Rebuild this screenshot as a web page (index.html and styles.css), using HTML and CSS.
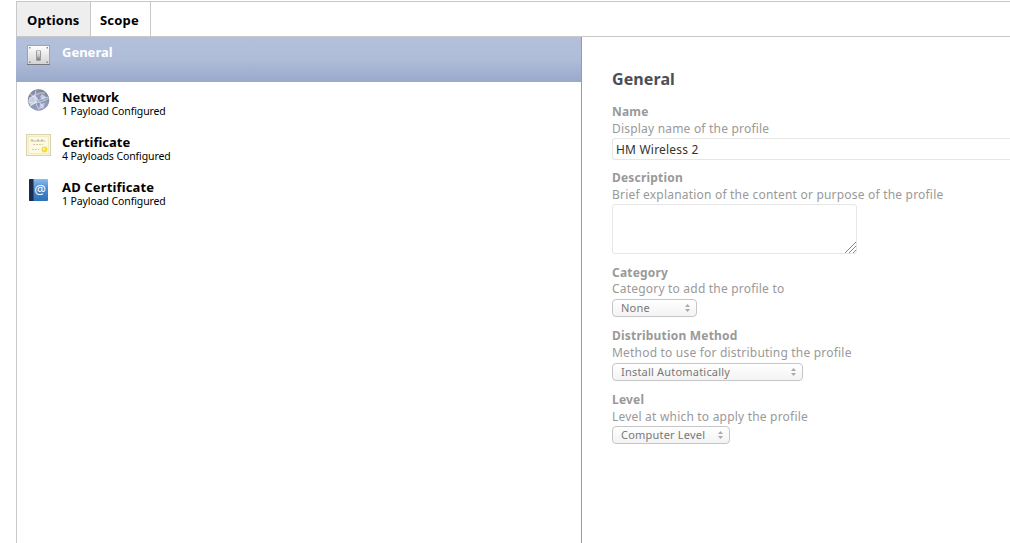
FILE: index.html
```
<!DOCTYPE html>
<html lang="en">
<head>
    <meta charset="UTF-8">
    <title>Configuration Profile</title>
    <link rel="stylesheet" href="styles.css">
</head>
<body>
    <div class="profile">
        <nav class="tabs">
            <a class="tab active">Options</a>
            <a class="tab scope">Scope</a>
        </nav>
        <div class="content">
            <ul class="payloads">
                <li class="payload selected">
                    <svg class="icon" width="26" height="24" viewBox="0 0 26 24">
                        <defs>
                            <linearGradient id="plate" x1="0" y1="0" x2="0" y2="1">
                                <stop offset="0" stop-color="#fff"/>
                                <stop offset="1" stop-color="#d2d2d2"/>
                            </linearGradient>
                            <linearGradient id="toggle" x1="0" y1="0" x2="0" y2="1">
                                <stop offset="0" stop-color="#f4f4f4"/>
                                <stop offset=".6" stop-color="#c4c4c4"/>
                                <stop offset="1" stop-color="#777"/>
                            </linearGradient>
                        </defs>
                        <rect x="1.5" y="1.5" width="22" height="19" fill="url(#plate)" stroke="#a2a3a8"/>
                        <path d="M1 20.5h23" stroke="#77787d"/>
                        <path d="M3 3h1.5v1.5H3zM20.5 3H22v1.5h-1.5zM3 17.5h1.5V19H3zM20.5 17.5H22V19h-1.5z" fill="#888"/>
                        <rect x="10" y="6" width="5" height="11" rx="1.5" fill="#9a9a9a"/>
                        <rect x="11" y="6.5" width="3" height="9" rx="1" fill="url(#toggle)"/>
                    </svg>
                    <div class="info">
                        <h2>General</h2>
                    </div>
                </li>
                <li class="payload">
                    <svg class="icon" width="26" height="24" viewBox="0 0 26 24">
                        <defs>
                            <radialGradient id="globe" cx=".5" cy=".6" r=".6">
                                <stop offset="0" stop-color="#8592b8"/>
                                <stop offset=".6" stop-color="#929dbd"/>
                                <stop offset="1" stop-color="#777b93"/>
                            </radialGradient>
                        </defs>
                        <circle cx="12.5" cy="11" r="10.7" fill="url(#globe)"/>
                        <path d="M4 5Q12-2 21 5Q16 7 10 5z" fill="#8d8fa0"/>
                        <path d="M3 9l5-3 4 3-2 5-5 3-2-3zM16 5l4 3-3 3-3-3zM14 15l5-1-2 5-4 1z" fill="#e3e7f2" opacity=".65"/>
                        <path d="M2 12Q9 3 19 4M4 5Q12 9 18 19M10 1Q7 11 13 21M2 13Q12 16 23 9M4 17Q14 9 22 8" fill="none" stroke="#f2f4fa" stroke-width=".6"/>
                    </svg>
                    <div class="info">
                        <h2>Network</h2>
                        <p>1 Payload Configured</p>
                    </div>
                </li>
                <li class="payload">
                    <svg class="icon" width="26" height="24" viewBox="0 0 26 24">
                        <rect x=".5" y=".5" width="24" height="21" fill="#fbf5d6" stroke="#d9d2ae"/>
                        <rect x="2.5" y="2.5" width="20" height="17" fill="#fdf9e2" stroke="#e8dfb4" stroke-dasharray="1 1"/>
                        <path d="M5 7.5l1-2 1 2 1-1 1 1 1-1 1 1 1-2 1 2 1-1 1 1 1-2 1 2 1-1 1 1" fill="none" stroke="#aaa68e" stroke-width=".8"/>
                        <path d="M7 10.5h10M6 15.5h7" stroke="#cfcab0" stroke-dasharray="2 1"/>
                        <circle cx="18.5" cy="15.5" r="3" fill="#f5dc3c"/>
                        <circle cx="18" cy="15" r="1.3" fill="#fff08a"/>
                    </svg>
                    <div class="info">
                        <h2>Certificate</h2>
                        <p>4 Payloads Configured</p>
                    </div>
                </li>
                <li class="payload">
                    <svg class="icon" width="26" height="24" viewBox="0 0 26 24">
                        <defs>
                            <linearGradient id="book" x1="0" y1="0" x2="0" y2="1">
                                <stop offset="0" stop-color="#8bbcec"/>
                                <stop offset=".45" stop-color="#4a8cd2"/>
                                <stop offset="1" stop-color="#2d6fb9"/>
                            </linearGradient>
                        </defs>
                        <rect x="3" y="0" width="19" height="22" rx="1" fill="url(#book)"/>
                        <path d="M4 0h3.5v22H4a1 1 0 0 1-1-1V1a1 1 0 0 1 1-1z" fill="#1d2c48"/>
                        <text x="14.2" y="14.5" class="at">@</text>
                    </svg>
                    <div class="info">
                        <h2 class="wide">AD Certificate</h2>
                        <p>1 Payload Configured</p>
                    </div>
                </li>
            </ul>
            <form class="settings">
                <h1>General</h1>
                <div class="field name">
                    <label>Name</label>
                    <p>Display name of the profile</p>
                    <div class="input">HM Wireless 2</div>
                </div>
                <div class="field description">
                    <label>Description</label>
                    <p>Brief explanation of the content or purpose of the profile</p>
                    <div class="textarea">
                        <svg width="12" height="12" viewBox="0 0 12 12">
                            <path d="M1 12L12 1M5 12l7-7M9 12l3-3" stroke="#888" stroke-width="1"/>
                        </svg>
                    </div>
                </div>
                <div class="field category">
                    <label>Category</label>
                    <p>Category to add the profile to</p>
                    <div class="select small">
                        <span>None</span>
                        <svg width="5" height="8" viewBox="0 0 5 8"><path d="M0 3l2.5-3L5 3zM0 5l2.5 3L5 5z" fill="#aaa"/></svg>
                    </div>
                </div>
                <div class="field distribution">
                    <label>Distribution Method</label>
                    <p>Method to use for distributing the profile</p>
                    <div class="select large">
                        <span>Install Automatically</span>
                        <svg width="5" height="8" viewBox="0 0 5 8"><path d="M0 3l2.5-3L5 3zM0 5l2.5 3L5 5z" fill="#aaa"/></svg>
                    </div>
                </div>
                <div class="field level">
                    <label>Level</label>
                    <p>Level at which to apply the profile</p>
                    <div class="select medium">
                        <span>Computer Level</span>
                        <svg width="5" height="8" viewBox="0 0 5 8"><path d="M0 3l2.5-3L5 3zM0 5l2.5 3L5 5z" fill="#aaa"/></svg>
                    </div>
                </div>
            </form>
        </div>
    </div>
</body>
</html>
```
FILE: styles.css
```
* {
    box-sizing: border-box;
    margin: 0;
    padding: 0;
}

body {
    height: 543px;
    overflow: hidden;
    background-color: #fff;
    color: #000;
    font-family: 'Noto Sans', sans-serif;
}

.profile {
    display: flex;
    flex-direction: column;
    height: 543px;
    margin-left: 16px;
    padding-top: 1px;
}

.tabs {
    display: flex;
    height: 36px;
    border: 1px solid #c8c8c8;
    border-right: none;
}

.tab {
    width: 74px;
    padding-left: 10px;
    border-right: 1px solid #c8c8c8;
    font-size: 13px;
    font-weight: 700;
    letter-spacing: 0.2px;
    line-height: 36px;
}

.tab.active {
    background-color: #eee;
}

.tab.scope {
    width: 60px;
    padding-left: 9px;
}

.content {
    display: flex;
    flex: 1;
    border-left: 1px solid #c8c8c8;
}

.payloads {
    width: 565px;
    border-right: 1px solid #9a9a9f;
    list-style: none;
}

.payload {
    display: flex;
    gap: 10px;
    height: 45px;
    padding: 7px 9px 0;
}

.payload.selected {
    margin-left: -1px;
    padding-left: 10px;
    background: linear-gradient(#b2c0db, #afbdd9 50%, #9aa8cb);
    color: #fff;
}

.icon {
    flex: none;
}

.info {
    padding-top: 1px;
}

.info h2 {
    font-size: 13px;
    line-height: 14px;
}

.info .wide {
    letter-spacing: 0.15px;
}

.info p {
    font-size: 10.5px;
    letter-spacing: -0.1px;
    line-height: 14px;
}

.at {
    fill: #fff;
    font-size: 13px;
    text-anchor: middle;
}

.settings {
    flex: 1;
    padding: 30px 0 0 30px;
    color: #999;
    font-size: 12px;
    letter-spacing: 0.2px;
}

.settings h1 {
    margin-bottom: 12px;
    color: #4b4f58;
    font-size: 16px;
    letter-spacing: 0.1px;
    line-height: 24px;
}

.field {
    display: flex;
    flex-direction: column;
    height: 64px;
}

.field.name {
    height: 66px;
}

.field.description {
    height: 95px;
}

.field.category {
    height: 63px;
}

.field label {
    font-weight: 700;
    line-height: 17px;
}

.field p {
    margin-bottom: 1px;
    line-height: 17px;
    white-space: nowrap;
}

.category p,
.distribution p {
    margin-bottom: 2px;
}

.category p {
    margin-top: -1px;
}

.input {
    height: 22px;
    border: 1px solid #e6e6e6;
    border-right: none;
    border-radius: 3px 0 0 3px;
    padding-left: 3px;
    color: #333;
    line-height: 21px;
}

.textarea {
    display: flex;
    align-items: flex-end;
    justify-content: flex-end;
    width: 245px;
    height: 50px;
    border: 1px solid #e6e6e6;
    border-radius: 3px;
}

.select {
    display: flex;
    align-items: center;
    justify-content: space-between;
    height: 18px;
    border: 1px solid #c6c6c6;
    border-radius: 4px;
    padding: 0 6px 0 8px;
    background: linear-gradient(#fff, #f3f3f3);
    color: #777;
    font-size: 11px;
    line-height: 16px;
}

.small {
    width: 85px;
}

.large {
    width: 191px;
}

.medium {
    width: 118px;
}
```
